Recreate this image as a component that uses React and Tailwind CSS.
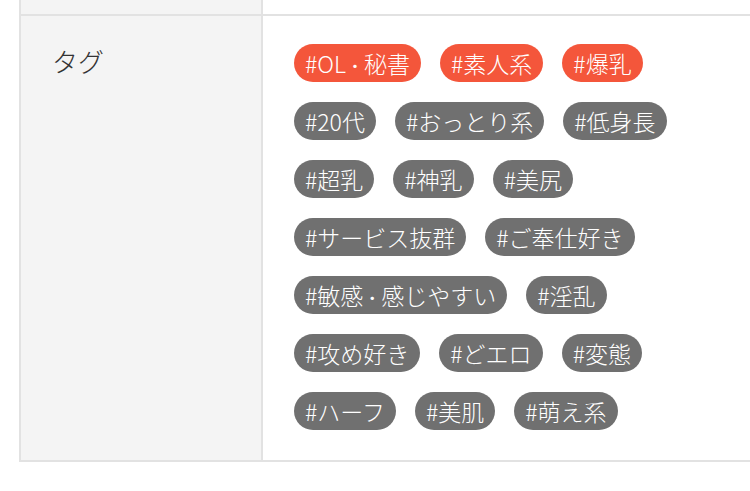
const hot = ['#OL・秘書', '#素人系', '#爆乳'];
const tags = [
  '#20代', '#おっとり系', '#低身長', '#超乳', '#神乳', '#美尻',
  '#サービス抜群', '#ご奉仕好き', '#敏感・感じやすい', '#淫乱',
  '#攻め好き', '#どエロ', '#変態', '#ハーフ', '#美肌', '#萌え系',
];

// the middle dot is set narrower than a full-width glyph in the original
const Label = ({ text }) =>
  text.split('・').map((part, i) => (
    <span key={i}>
      {i > 0 && <span className="text-[18px]">・</span>}
      {part}
    </span>
  ));

const Tag = ({ label, hot }) => (
  <span
    className={`inline-flex h-[38px] items-center rounded-full px-[11px] text-[23px] font-light text-white ${hot ? 'bg-[#f4563b]' : 'bg-[#707070]'}`}
  >
    <Label text={label} />
  </span>
);

const App = () => {
  return (
    <div
      className="w-[750px] h-[491px] overflow-hidden bg-white"
      style={{ fontFamily: '"Noto Sans CJK JP", "Noto Sans", sans-serif' }}
    >
      <div className="ml-[19px] w-[800px] border-2 border-t-0 border-[#e2e2e2]">
        {/* previous row, cut off at top */}
        <div className="flex h-[14px]">
          <div className="w-[242px] bg-[#f4f4f4] border-r-2 border-[#e2e2e2]" />
          <div className="flex-1" />
        </div>

        {/* tags row */}
        <div className="flex border-t-2 border-[#e2e2e2]">
          <div className="w-[242px] shrink-0 bg-[#f4f4f4] border-r-2 border-[#e2e2e2] pl-[31px] pt-[28px]">
            <div className="h-[38px] leading-[34px] text-[26px] font-light text-[#333]">タグ</div>
          </div>
          <div className="w-[440px] pl-[31px] pt-[28px] pb-[30px]">
            <div className="flex gap-x-[19px]">
              {hot.map((t) => (
                <Tag key={t} label={t} hot />
              ))}
            </div>
            {[tags.slice(0, 3), tags.slice(3, 6), tags.slice(6, 8), tags.slice(8, 10), tags.slice(10, 13), tags.slice(13, 16)].map((row, i) => (
              <div key={i} className="mt-[20px] flex gap-x-[19px]">
                {row.map((t) => <Tag key={t} label={t} />)}
              </div>
            ))}
          </div>
        </div>
      </div>
    </div>
  );
};

export default App;
